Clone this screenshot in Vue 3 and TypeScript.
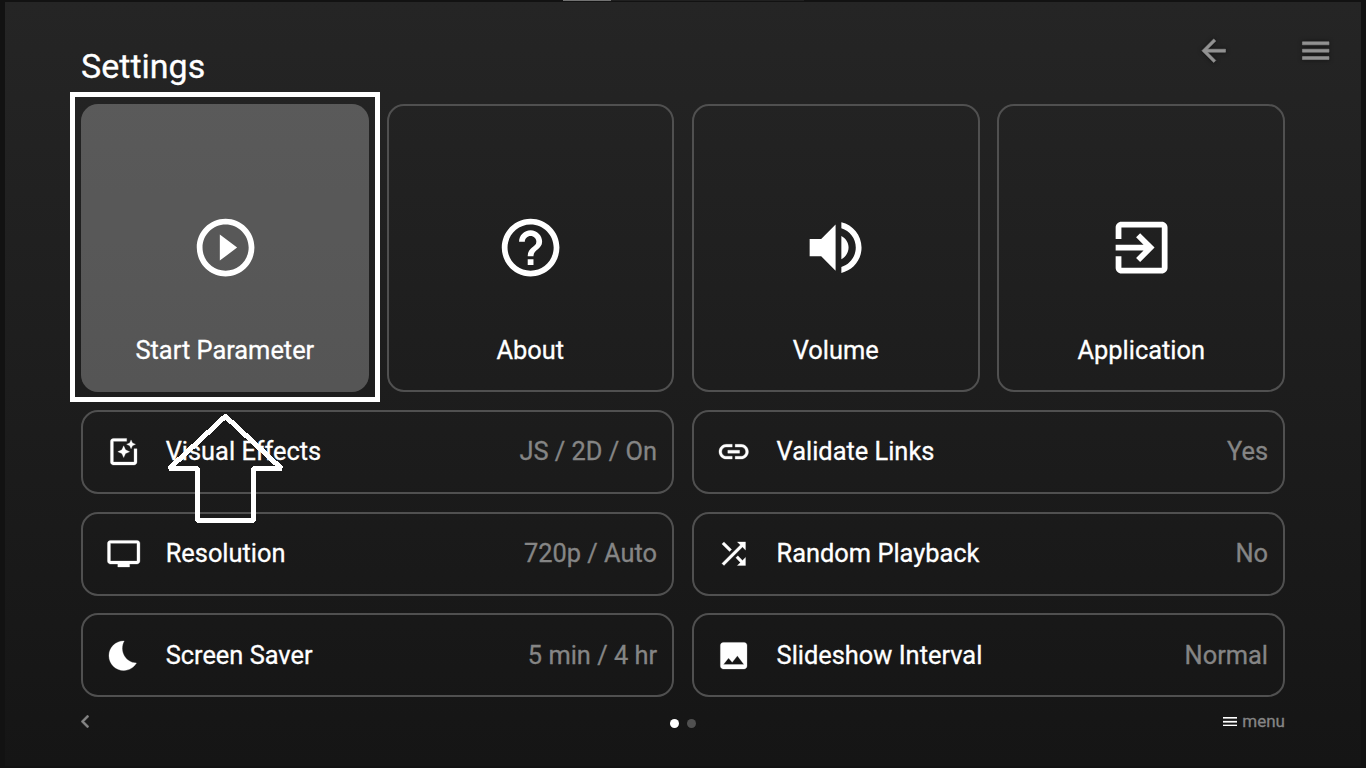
<script setup lang="ts">
interface Tile { label: string; icon: string; active?: boolean }
interface Row { label: string; value: string; icon: string }

const menuIcon = 'M3 18h18v-2H3v2zm0-5h18v-2H3v2zm0-7v2h18V6H3z'
const backIcon = 'M20 11H7.83l5.59-5.59L12 4l-8 8 8 8 1.41-1.41L7.83 13H20v-2z'

const tiles: Tile[] = [
  { label: 'Start Parameter', active: true, icon: 'M10 16.5l6-4.5-6-4.5v9zM12 2C6.48 2 2 6.48 2 12s4.48 10 10 10 10-4.48 10-10S17.52 2 12 2zm0 18c-4.41 0-8-3.59-8-8s3.59-8 8-8 8 3.59 8 8-3.59 8-8 8z' },
  { label: 'About', icon: 'M11 18h2v-2h-2v2zm1-16C6.48 2 2 6.48 2 12s4.48 10 10 10 10-4.48 10-10S17.52 2 12 2zm0 18c-4.41 0-8-3.59-8-8s3.59-8 8-8 8 3.59 8 8-3.59 8-8 8zm0-14c-2.21 0-4 1.79-4 4h2c0-1.1.9-2 2-2s2 .9 2 2c0 2-3 1.75-3 5h2c0-2.25 3-2.5 3-5 0-2.21-1.79-4-4-4z' },
  { label: 'Volume', icon: 'M3 9v6h4l5 5V4L7 9H3zm13.5 3c0-1.77-1.02-3.29-2.5-4.03v8.05c1.48-.73 2.5-2.25 2.5-4.02zM14 3.23v2.06c2.89.86 5 3.54 5 6.71s-2.11 5.85-5 6.71v2.06c4.01-.91 7-4.49 7-8.77s-2.99-7.86-7-8.77z' },
  { label: 'Application', icon: 'M10.09 15.59L11.5 17l5-5-5-5-1.41 1.41L12.67 11H3v2h9.67l-2.58 2.59zM19 3H5c-1.11 0-2 .9-2 2v4h2V5h14v14H5v-4H3v4c0 1.1.89 2 2 2h14c1.1 0 2-.9 2-2V5c0-1.1-.9-2-2-2z' },
]

const rows: Row[] = [
  { label: 'Visual Effects', value: 'JS / 2D / On', icon: 'M19.02 10v9H5V5h9V3H5.02c-1.1 0-2 .9-2 2v14c0 1.1.9 2 2 2H19c1.1 0 2-.9 2-2v-9h-1.98zM17 10l.94-2.06L20 7l-2.06-.94L17 4l-.94 2.06L14 7l2.06.94zM13.25 10.75L12 8l-1.25 2.75L8 12l2.75 1.25L12 16l1.25-2.75L16 12z' },
  { label: 'Validate Links', value: 'Yes', icon: 'M3.9 12c0-1.71 1.39-3.1 3.1-3.1h4V7H7c-2.76 0-5 2.24-5 5s2.24 5 5 5h4v-1.9H7c-1.71 0-3.1-1.39-3.1-3.1zM8 13h8v-2H8v2zm9-6h-4v1.9h4c1.71 0 3.1 1.39 3.1 3.1s-1.39 3.1-3.1 3.1h-4V17h4c2.76 0 5-2.24 5-5s-2.24-5-5-5z' },
  { label: 'Resolution', value: '720p / Auto', icon: 'M21 3H3c-1.1 0-2 .9-2 2v12c0 1.1.9 2 2 2h5v2h8v-2h5c1.1 0 2-.9 2-2V5c0-1.1-.9-2-2-2zm0 14H3V5h18v12z' },
  { label: 'Random Playback', value: 'No', icon: 'M10.59 9.17L5.41 4 4 5.41l5.17 5.17 1.42-1.41zM14.5 4l2.04 2.04L4 18.59 5.41 20 17.96 7.46 20 9.5V4h-5.5zm.33 9.41l-1.41 1.41 3.13 3.13L14.5 20H20v-5.5l-2.04 2.04-3.13-3.13z' },
  { label: 'Screen Saver', value: '5 min / 4 hr', icon: 'M12.34 2.02C6.59 1.82 2 6.42 2 12c0 5.52 4.48 10 10 10 3.71 0 6.93-2.02 8.66-5.02-7.51-.25-12.09-8.43-8.32-14.96z' },
  { label: 'Slideshow Interval', value: 'Normal', icon: 'M21 19V5c0-1.1-.9-2-2-2H5c-1.1 0-2 .9-2 2v14c0 1.1.9 2 2 2h14c1.1 0 2-.9 2-2zM8.5 13.5l2.5 3.01L14.5 12l4.5 6H5l3.5-4.5z' },
]
</script>

<template>
  <div class="screen">
    <div class="progress"><span class="progress-bar"></span></div>
    <main class="panel">
      <header class="header">
        <h1>Settings</h1>
        <nav class="actions">
          <svg viewBox="0 0 24 24"><path :d="backIcon" /></svg>
          <svg viewBox="0 0 24 24"><path :d="menuIcon" /></svg>
        </nav>
      </header>
      <section class="grid">
        <div v-for="t in tiles" :key="t.label" class="tile" :class="{ active: t.active }">
          <svg viewBox="0 0 24 24"><path :d="t.icon" /></svg>
          <span>{{ t.label }}</span>
        </div>
        <div v-for="r in rows" :key="r.label" class="row">
          <svg viewBox="0 0 24 24"><path :d="r.icon" /></svg>
          <span class="label">{{ r.label }}</span>
          <span class="value">{{ r.value }}</span>
        </div>
      </section>
      <footer class="footer">
        <svg class="prev" viewBox="8 6 7.41 12"><path d="M15.41 7.41L14 6l-6 6 6 6 1.41-1.41L10.83 12z" /></svg>
        <div class="dots"><i class="on"></i><i></i></div>
        <div class="menu">
          <svg viewBox="3 6 18 12"><path :d="menuIcon" /></svg>
          <span>menu</span>
        </div>
      </footer>
    </main>
    <div class="highlight"></div>
    <svg class="pointer" viewBox="0 0 120 114">
      <path d="M60.4 6.3L4.4 58.5H32.5V110.8H88.7V58.5H116.4Z" />
    </svg>
  </div>
</template>

<style>
body { margin: 0; background: #121212; }
</style>

<style scoped>
.screen {
  position: relative;
  box-sizing: border-box;
  width: 1366px;
  height: 768px;
  padding: 2px 5px;
  overflow: hidden;
  background: #121212;
  font-family: Roboto, "Liberation Sans", sans-serif;
  color: #fff;
  -webkit-text-stroke: 0.3px currentColor;
}
svg { display: block; fill: currentColor; }
.progress {
  position: absolute;
  top: 0;
  left: 563px;
  width: 241px;
  height: 1px;
  background: #202020;
}
.progress-bar { display: block; width: 48px; height: 1px; background: #727272; }
.panel {
  box-sizing: border-box;
  width: 1356px;
  height: 764px;
  padding: 0 76px 0 76.1px;
  background: linear-gradient(#252525, #151515);
}
.header {
  display: flex;
  justify-content: space-between;
  height: 102.4px;
}
h1 {
  margin: 42.5px 0 0;
  font-size: 34px;
  line-height: 42px;
  font-weight: 400;
}
.actions {
  display: flex;
  gap: 66.4px;
  margin: 31.1px -48.4px 0 0;
  color: #929292;
}
.actions svg {
  width: 35.4px;
  height: 35.4px;
  stroke: currentColor;
  stroke-width: 0.4;
  filter: drop-shadow(0 0 2px rgba(0, 0, 0, 0.6));
}
.grid {
  display: grid;
  grid-template-columns: repeat(4, 1fr);
  grid-template-rows: 287.6px repeat(3, 83.9px);
  gap: 17.9px;
}
.tile, .row {
  box-sizing: border-box;
  border: 2px solid #505050;
  border-radius: 17px;
  font-size: 25.4px;
  line-height: 30px;
}
.tile {
  display: flex;
  flex-direction: column;
  align-items: center;
  padding-top: 107.1px;
}
.tile svg {
  width: 69.2px;
  height: 69.2px;
  margin: 0 0 52.4px 0.6px;
}
.tile.active { border-color: transparent; background: rgba(255, 255, 255, 0.25); }
.row {
  grid-column: span 2;
  display: flex;
  align-items: center;
  padding: 0 15px 0 22.5px;
}
.row svg {
  width: 35.4px;
  height: 35.4px;
  margin-right: 24.7px;
  stroke: currentColor;
  stroke-width: 0.2;
}
.label, .value { margin-top: -0.8px; }
.label { flex: 1; }
.value { color: #858585; }
.footer {
  display: grid;
  grid-template-columns: 1fr auto 1fr;
  align-items: center;
  height: 48px;
  color: #858585;
}
.prev { width: 8px; height: 13px; stroke: currentColor; stroke-width: 0.4; }
.dots { display: flex; gap: 8px; margin-top: 4px; }
.dots i { width: 9px; height: 9px; border-radius: 50%; background: #505050; }
.dots .on { background: #fff; }
.menu {
  display: flex;
  align-items: center;
  justify-self: end;
  gap: 5px;
  font-size: 17px;
  line-height: 20px;
}
.menu svg { width: 14px; height: 9.4px; color: #fff; stroke: currentColor; stroke-width: 0.3; }
.highlight {
  position: absolute;
  top: 92px;
  left: 70px;
  box-sizing: border-box;
  width: 310px;
  height: 310px;
  border: 5px solid #fff;
}
.pointer {
  position: absolute;
  top: 410px;
  left: 165px;
  width: 120px;
  height: 114px;
}
.pointer path {
  fill: none;
  stroke: #fff;
  stroke-width: 5;
  stroke-linejoin: bevel;
  shape-rendering: crispEdges;
}
</style>
